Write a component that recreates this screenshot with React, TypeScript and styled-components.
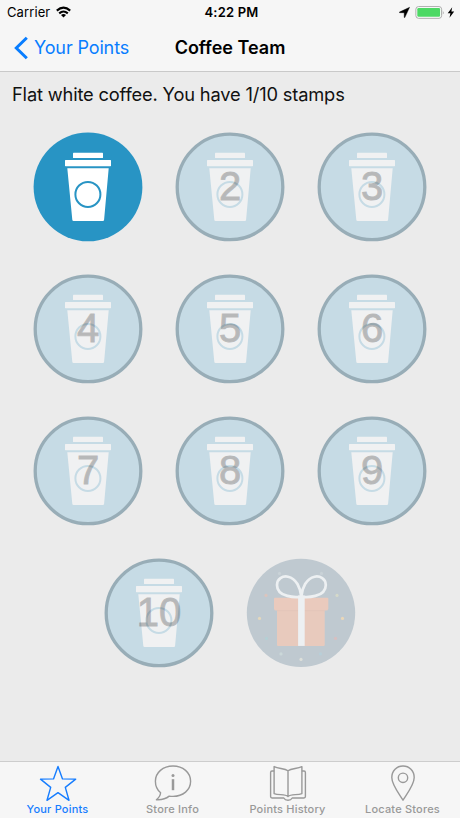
import React from 'react';
import styled, { createGlobalStyle } from 'styled-components';

const GlobalStyle = createGlobalStyle`
  * { box-sizing: border-box; }
  body { margin: 0; font-family: Inter, "Liberation Sans", sans-serif; color: #000; background: #ebebeb; }
  svg { display: block; overflow: visible; }
`;

const Screen = styled.div`
  width: 460px;
  height: 818px;
  display: flex;
  flex-direction: column;
  overflow: hidden;
  background: #ebebeb;
`;

const Header = styled.header`
  flex: none;
  height: 72px;
  background: #f6f6f6;
  border-bottom: 1px solid #c9c9c9;
`;

const StatusBar = styled.div`
  height: 24px;
  display: grid;
  grid-template-columns: 1fr auto 1fr;
  align-items: center;
  padding: 0 5px 0 7px;
  font-size: 13px;
  line-height: 24px;
`;

const Carrier = styled.div`
  display: flex;
  align-items: center;
  gap: 6px;
  letter-spacing: 0.1px;
`;

const Clock = styled.div`
  font-weight: 600;
  font-size: 13px;
  letter-spacing: 0.2px;
  padding-left: 1px;
`;

const Indicators = styled.div`
  display: flex;
  align-items: center;
  justify-content: flex-end;
  gap: 1px;
`;

const BatteryGroup = styled.span`
  padding-left: 4px;
`;

const NavBar = styled.nav`
  height: 47px;
  display: grid;
  grid-template-columns: 1fr auto 1fr;
  align-items: center;
  padding: 0 14px;
`;

const BackButton = styled.button`
  display: flex;
  align-items: center;
  gap: 5px;
  padding: 0;
  border: 0;
  background: none;
  color: #087dff;
  font: 400 18px/24px Inter, sans-serif;
  letter-spacing: -0.13px;
`;

const Title = styled.h1`
  margin: 0;
  font-size: 18px;
  line-height: 24px;
  font-weight: 600;
  letter-spacing: 0;
`;

const Message = styled.p`
  flex: none;
  margin: 0;
  padding: 10px 12px 0;
  height: 60px;
  font-size: 18.3px;
  line-height: 24px;
  letter-spacing: -0.17px;
  color: #111;
  white-space: nowrap;
`;

const Stamps = styled.main`
  flex: 1;
  width: 393px;
  margin-left: 33px;
  display: flex;
  flex-wrap: wrap;
  justify-content: center;
  align-content: flex-start;
  gap: 33px;
`;

const Stamp = styled.div`
  display: grid;
  width: 109px;
  height: 109px;
  place-items: center;
  > * { grid-area: 1 / 1; }
`;

const StampNumber = styled.span`
  font-family: "Liberation Sans", Arial, sans-serif;
  font-size: 40px;
  line-height: 109px;
  color: #000;
  -webkit-text-stroke: 0.9px #000;
  opacity: 0.23;
  padding-left: 1px;
`;

const TabBar = styled.footer`
  flex: none;
  height: 57px;
  display: grid;
  grid-template-columns: repeat(4, 1fr);
  background: #f6f6f6;
  border-top: 1px solid #cdcdcd;
`;

const Tab = styled.div<{ $active?: boolean }>`
  display: flex;
  flex-direction: column;
  align-items: center;
  gap: 1px;
  padding-top: 3px;
  color: ${(p) => (p.$active ? '#167dff' : '#999')};
`;

const TabLabel = styled.span`
  font-size: 11px;
  line-height: 14px;
  font-weight: 500;
  letter-spacing: 0.2px;
  white-space: nowrap;
`;

function Cup({ filled }: { filled: boolean }) {
  const tint = filled ? '#2894c4' : '#c6dbe5';
  const cup = filled ? '#fff' : '#f0f1f2';
  return (
    <svg width="109" height="109" viewBox="-0.5 -0.4 109 109">
      <circle cx="54.5" cy="54.5" r={filled ? 54.4 : 52.8} fill={tint} stroke={filled ? 'none' : '#98adb7'} strokeWidth="3.3" />
      <rect x="39.5" y="20.3" width="30" height="5.3" rx=".6" fill={cup} />
      <rect x="31.5" y="27.6" width="46" height="6.2" rx=".6" fill={cup} />
      <path d="M33.8 35.8H75.2L70.6 87.4Q70.5 88.6 69.3 88.6H40.1Q38.9 88.6 38.8 87.4Z" fill={cup} />
      <circle cx="54.4" cy="62" r="12.5" fill="none" stroke={tint} strokeWidth="2" />
    </svg>
  );
}

const confetti: [number, number, string][] = [
  [19.5, 37, '#dcc4bd'], [13, 60, '#e4d8bd'], [20, 80, '#b3d0d5'], [34.5, 95.5, '#cbd8d9'],
  [54.5, 101, '#dddfda'], [74, 95.5, '#b8cfd8'], [89, 80, '#d8bfc0'], [96, 60, '#ead7b8'],
  [90.5, 37, '#d5d9c9'], [33, 15, '#c9d2d7'], [75, 15, '#c9d2d7'],
];

function Gift() {
  return (
    <svg width="109" height="109" viewBox="-0.5 -0.4 109 109">
      <circle cx="54.5" cy="54.5" r="54.2" fill="#bfc9d0" />
      {confetti.map(([x, y, color]) => (
        <circle key={`${x}-${y}`} cx={x} cy={y} r="1.6" fill={color} />
      ))}
      <path d="M30.5 50H78.2V86.5Q78.2 87.5 77.2 87.5H31.5Q30.5 87.5 30.5 86.5Z" fill="#e8cabd" />
      <path d="M28.5 39.3H80.8Q81.8 39.3 81.8 40.3V50Q81.8 52.2 79.6 52.2H29.7Q27.5 52.2 27.5 50V40.3Q27.5 39.3 28.5 39.3Z" fill="#eacabd" />
      <path d="M30.5 52.2H78.2" stroke="#dfc2b8" strokeWidth=".6" />
      <rect x="51.6" y="37" width="6.6" height="50.5" fill="#edf0f2" />
      <path
        d="M54.8 38.2C50 39.2 30.4 39.3 30.5 26.5C30.6 20.5 36 17.2 41.5 18.3C49.8 20 54 29.5 54.8 38.2C55.6 29.5 59.8 20 68.1 18.3C73.6 17.2 79.2 20.5 79.3 26.5C79.3 39.3 59.6 39.2 54.8 38.2Z"
        fill="none" stroke="#edf0f2" strokeWidth="2.7" strokeLinejoin="round"
      />
    </svg>
  );
}

const WifiIcon = () => (
  <svg width="15" height="12" viewBox="0 0 15 12">
    <g fill="none" stroke="#000" strokeWidth="2.1">
      <path d="M.8 4.6Q7.5-1.3 14.2 4.6" />
      <path d="M3.2 7.4Q7.5 3.6 11.8 7.4" />
    </g>
    <path d="M7.5 11.5L5 9Q7.5 7 10 9Z" />
  </svg>
);

const LocationArrow = () => (
  <svg width="11" height="11" viewBox="0 0 11 11">
    <path d="M10.6.3L.4 5.1L.6 5.7H5.2V10.4L5.8 10.6Z" stroke="#000" strokeWidth=".4" />
  </svg>
);

const Battery = () => (
  <svg width="31" height="13" viewBox="0 0 31 13">
    <rect x=".9" y=".6" width="25.7" height="11.7" rx="2.6" fill="#fff" stroke="#aaa" strokeWidth="1" />
    <rect x="2.3" y="2.1" width="22.8" height="8.7" rx="1.2" fill="#4cd964" />
    <path d="M27.8 4.4Q29.6 6.4 27.8 8.5Z" fill="#aaa" />
  </svg>
);

const Bolt = () => (
  <svg width="8" height="11" viewBox="0 0 8 11">
    <path d="M5.2.2L.7 6.2H3.4L2.5 10.8L7.2 4.6H4.4Z" />
  </svg>
);

const BackChevron = () => (
  <svg width="15" height="24" viewBox="0 0 15 24">
    <path d="M12.8 1.7L2.3 12L12.8 22.3" fill="none" stroke="#087dff" strokeWidth="3" />
  </svg>
);

const StarIcon = () => (
  <path d="M18 1.4L22.5 13.9L35.7 14.1L25.3 22.4L29 35.3L18 27.7L7 35.3L10.7 22.4L.5 14.1L13.5 13.9Z" />
);

const InfoIcon = () => (
  <>
    <path d="M18 1C28 1 35.6 7.6 35.6 16.3S28 31.4 18 31.4Q16 31.4 14.2 31.1Q9.2 35.2 1.4 34.7Q5.2 32 5.6 27.8C2.2 25 .4 20.9 .4 16.3C.4 7.6 8 1 18 1Z" />
    <path d="M18 14.2V25.2" strokeWidth="2.5" />
    <circle cx="18" cy="10.5" r="1.5" fill="currentColor" stroke="none" />
  </>
);

const BookIcon = () => (
  <>
    <path d="M18 5.8C14.5 3 9 4 4.1 1.6V28.6C9 30.5 15 28.5 18 31.5C21 28.5 27 30.5 31.9 28.6V1.6C27 4 21.5 3 18 5.8ZM18 5.8V31.5" />
    <path d="M4.1 6H2Q.6 6 .6 7.4V31.6Q.6 33 2 33H13.8Q15 35.2 18 35.2T22.2 33H34Q35.4 33 35.4 31.6V7.4Q35.4 6 34 6H31.9" />
  </>
);

const PinIcon = () => (
  <>
    <path d="M18 35.2C15 30 6.8 20.1 6.8 12.5C6.8 5.8 11.7 1 18 1S29.2 5.8 29.2 12.5C29.2 20.1 21 30 18 35.2Z" />
    <circle cx="18" cy="12.8" r="4.7" />
  </>
);

const tabs = [
  { label: 'Your Points', Icon: StarIcon, active: true },
  { label: 'Store Info', Icon: InfoIcon },
  { label: 'Points History', Icon: BookIcon },
  { label: 'Locate Stores', Icon: PinIcon },
];

const stampNumbers = Array.from({ length: 10 }, (_, i) => i + 1);
const collected = 1;

export default function App() {
  return (
    <Screen>
      <GlobalStyle />
      <Header>
        <StatusBar>
          <Carrier>Carrier <WifiIcon /></Carrier>
          <Clock>4:22 PM</Clock>
          <Indicators>
            <LocationArrow />
            <BatteryGroup><Battery /></BatteryGroup>
            <Bolt />
          </Indicators>
        </StatusBar>
        <NavBar>
          <BackButton><BackChevron />Your Points</BackButton>
          <Title>Coffee Team</Title>
        </NavBar>
      </Header>
      <Message>Flat white coffee. You have 1/10 stamps</Message>
      <Stamps>
        {stampNumbers.map((n) => (
          <Stamp key={n}>
            <Cup filled={n <= collected} />
            {n > collected && <StampNumber>{n}</StampNumber>}
          </Stamp>
        ))}
        <Stamp><Gift /></Stamp>
      </Stamps>
      <TabBar>
        {tabs.map(({ label, Icon, active }) => (
          <Tab key={label} $active={active}>
            <svg width="36" height="36" viewBox="0 0 36 36" fill="none" stroke="currentColor" strokeWidth="1.4" strokeLinejoin="round">
              <Icon />
            </svg>
            <TabLabel>{label}</TabLabel>
          </Tab>
        ))}
      </TabBar>
    </Screen>
  );
}
